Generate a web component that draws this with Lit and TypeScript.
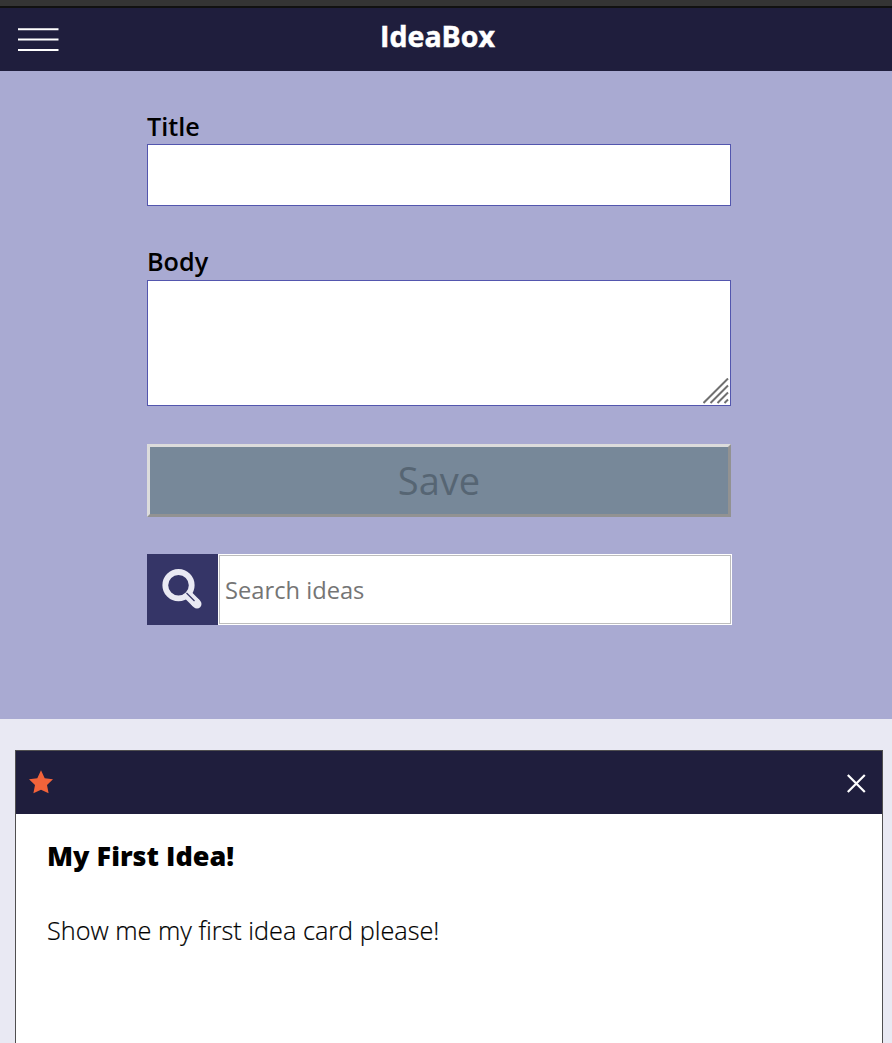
import { LitElement, html, css } from "lit";
import { customElement } from "lit/decorators.js";

@customElement("app-root")
export class AppRoot extends LitElement {
  static styles = css`
    :host {
      display: flex;
      flex-direction: column;
      height: 1043px;
      overflow: hidden;
      background: #e9e9f3;
      color: #000;
      font-family: "Open Sans", "Noto Sans", sans-serif;
    }
    * { box-sizing: border-box; }
    svg { display: block; }
    .chrome { flex: none; height: 8px; background: #343434; border-bottom: 2px solid #111; }
    header {
      flex: none;
      height: 63px;
      padding: 0 18px;
      display: grid;
      grid-template-columns: 42px 1fr 59px;
      background: #1f1e3d;
      color: #fff;
    }
    .menu { padding-top: 19px; }
    h1 {
      margin: 0;
      text-align: center;
      font-size: 28.5px;
      line-height: 56px;
      font-weight: 700;
      -webkit-text-stroke: 0.5px #fff;
    }
    form {
      flex: none;
      height: 648px;
      padding: 37px 161px 0 147px;
      display: flex;
      flex-direction: column;
      background: #a9aad2;
    }
    label { font-size: 25.2px; line-height: 36px; font-weight: 600; }
    .field { border: 1px solid #5356ae; background: #fff; }
    .title { height: 62px; margin-bottom: 37px; }
    .body {
      height: 126px;
      margin-top: 1px;
      display: flex;
      justify-content: flex-end;
      align-items: flex-end;
      padding: 0 1px 1px 0;
    }
    .save {
      height: 73px;
      margin: 38px 0 37px;
      padding: 0 0 1px;
      border: 3px solid;
      border-color: #dcdcdc #929292 #929292 #dcdcdc;
      background: #778899;
      color: #566573;
      font: 400 38px/66px "Open Sans", sans-serif;
      text-align: center;
    }
    .search { display: flex; height: 71px; margin-right: -1px; }
    .lens { width: 71px; background: #353567; padding: 15px; }
    .query { flex: 1; background: #fff; padding: 1px; }
    .inner {
      height: 69px;
      border: 1px solid #bdbdbd;
      padding-left: 5px;
      color: #757575;
      font-size: 23.7px;
      line-height: 69px;
    }
    .card {
      flex: none;
      height: 330px;
      margin: 31px 9px 0 15px;
      border: 1px solid #504f50;
      background: #fff;
    }
    .bar {
      height: 63px;
      display: flex;
      justify-content: space-between;
      align-items: center;
      padding: 0 16px 0 12px;
      background: #1f1e3d;
    }
    .text { padding: 23px 31px; }
    h2 { margin: 0; font-size: 27px; line-height: 38px; font-weight: 800; }
    p {
      margin: 37px 0 0;
      font-size: 25.25px;
      line-height: 36px;
      font-weight: 300;
      -webkit-text-stroke: 0.2px #000;
    }
  `;

  render() {
    return html`
      <div class="chrome"></div>
      <header>
        <div class="menu">
          <svg width="42" height="26" stroke="#fff" stroke-width="2">
            <path d="M0 2.3H40.5M0 12.5H40.5M0 23H40.5" />
          </svg>
        </div>
        <h1><span class="name">IdeaBox</span></h1>
      </header>
      <form>
        <label><span>Title</span></label>
        <div class="field title"></div>
        <label><span>Body</span></label>
        <div class="field body">
          <svg width="26" height="26" stroke="#707070" stroke-width="2">
            <path d="M.5 25 25 .5M7.5 25 25 7.5M14.5 25 25 14.5M21.5 25 25 21.5" />
          </svg>
        </div>
        <button class="save" type="button" disabled><span>Save</span></button>
        <div class="search">
          <div class="lens">
            <svg width="41" height="41" fill="none">
              <circle cx="16.5" cy="16.2" r="13.2" stroke="#e9e9f3" stroke-width="5.8" />
              <path d="M26 26 34.5 34.5" stroke="#e9e9f3" stroke-width="9.4" />
              <path d="M33.4 33.4 35 35" stroke="#e9e9f3" stroke-width="9" stroke-linecap="round" />
              <path d="M24.5 24 32.5 32" stroke="#353567" stroke-width="1.2" />
            </svg>
          </div>
          <div class="query"><div class="inner"><span>Search ideas</span></div></div>
        </div>
      </form>
      <article class="card">
        <div class="bar">
          <svg width="26" height="26" fill="#f2633a">
            <path d="M13 .2 16.7 8.3 25 9.3 19 15 20.6 23.2 13 19.7 5.4 23.2 7 15 1 9.3 9.3 8.3Z" />
          </svg>
          <svg width="20" height="20" stroke="#fff" stroke-width="2.2">
            <path d="M1.8 2 18.8 19M18.8 2 1.8 19" />
          </svg>
        </div>
        <div class="text">
          <h2><span>My First Idea!</span></h2>
          <p><span>Show me my first idea card please!</span></p>
        </div>
      </article>
    `;
  }
}
